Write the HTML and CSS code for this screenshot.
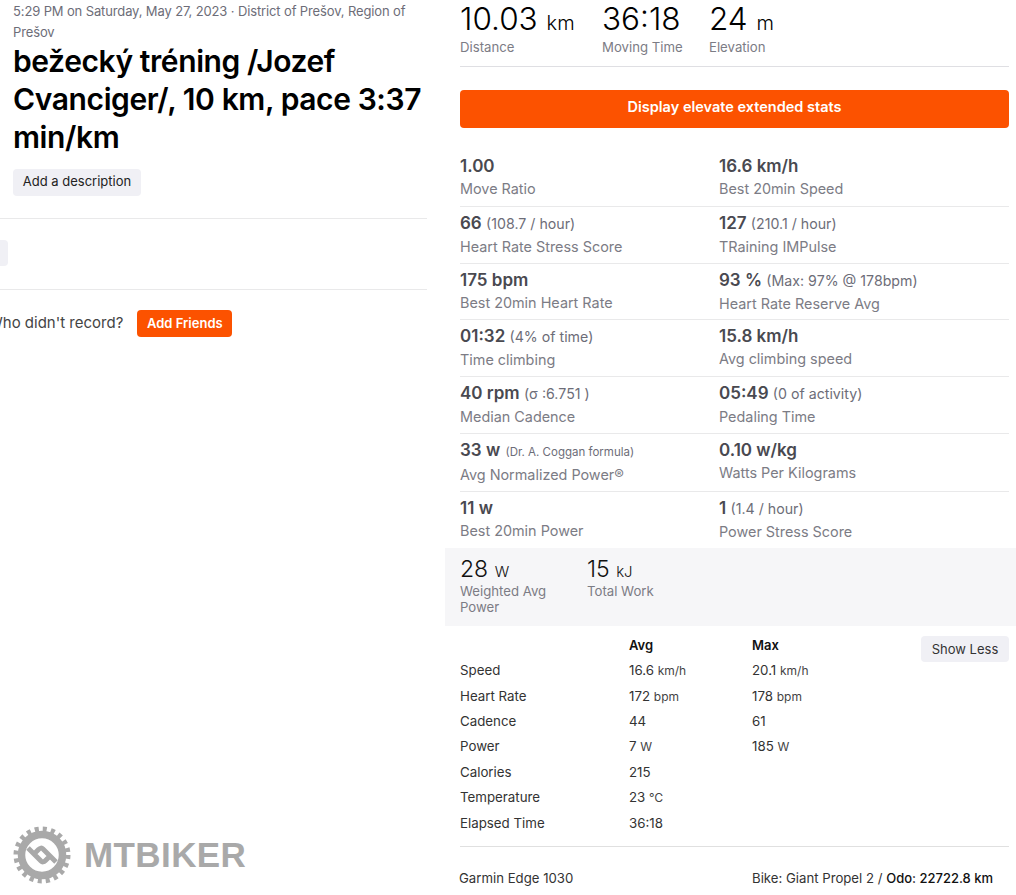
FILE: index.html
```html
<!DOCTYPE html>
<html lang="en">
<head>
<meta charset="utf-8">
<title>Activity</title>
<link rel="stylesheet" href="styles.css">
</head>
<body>
<div class="page">
  <section class="left">
    <div class="meta">5:29 PM on Saturday, May 27, 2023 · District of Prešov, Region of Prešov</div>
    <h1 class="title">bežecký tréning /Jozef Cvanciger/, 10 km, pace 3:37 min/km</h1>
    <button class="btn-light add-desc">Add a description</button>
    <hr class="rule first-rule">
    <div class="stub"></div>
    <hr class="rule second-rule">
    <div class="friends"><span class="friends-text">Who didn't record?</span><button class="btn-orange add-friends">Add Friends</button></div>
  </section>
  <section class="right">
    <div class="inset">
      <div class="top-stats">
        <div class="top-stat s1"><div class="big">10.03 <abbr>km</abbr></div><div class="lab">Distance</div></div>
        <div class="top-stat s2"><div class="big">36:18</div><div class="lab">Moving Time</div></div>
        <div class="top-stat"><div class="big">24 <abbr>m</abbr></div><div class="lab">Elevation</div></div>
      </div>
      <button class="btn-orange elevate">Display elevate extended stats</button>
      <div class="grid">
        <div class="cell"><div class="val">1.00</div><div class="lab">Move Ratio</div></div>
        <div class="cell"><div class="val">16.6 km/h</div><div class="lab">Best 20min Speed</div></div>
        <div class="cell"><div class="val">66 <small>(108.7 / hour)</small></div><div class="lab">Heart Rate Stress Score</div></div>
        <div class="cell"><div class="val">127 <small>(210.1 / hour)</small></div><div class="lab">TRaining IMPulse</div></div>
        <div class="cell"><div class="val">175 bpm</div><div class="lab">Best 20min Heart Rate</div></div>
        <div class="cell"><div class="val">93 % <small>(Max: 97% @ 178bpm)</small></div><div class="lab">Heart Rate Reserve Avg</div></div>
        <div class="cell"><div class="val">01:32 <small>(4% of time)</small></div><div class="lab">Time climbing</div></div>
        <div class="cell"><div class="val">15.8 km/h</div><div class="lab">Avg climbing speed</div></div>
        <div class="cell"><div class="val">40 rpm <small>(σ :6.751 )</small></div><div class="lab">Median Cadence</div></div>
        <div class="cell"><div class="val">05:49 <small>(0 of activity)</small></div><div class="lab">Pedaling Time</div></div>
        <div class="cell tall"><div class="val">33 w <small class="tiny">(Dr. A. Coggan formula)</small></div><div class="lab">Avg Normalized Power®</div></div>
        <div class="cell tall"><div class="val">0.10 w/kg</div><div class="lab">Watts Per Kilograms</div></div>
        <div class="cell last"><div class="val">11 w</div><div class="lab">Best 20min Power</div></div>
        <div class="cell last"><div class="val">1 <small>(1.4 / hour)</small></div><div class="lab">Power Stress Score</div></div>
      </div>
    </div>
    <div class="band">
      <div class="band-stat w1"><div class="mid">28 <abbr>W</abbr></div><div class="lab tight">Weighted Avg Power</div></div>
      <div class="band-stat"><div class="mid">15 <abbr>kJ</abbr></div><div class="lab tight">Total Work</div></div>
    </div>
    <div class="inset">
      <div class="more">
        <div class="table">
          <div></div><div class="th">Avg</div><div class="th">Max</div>
          <div>Speed</div><div>16.6 <i>km/h</i></div><div>20.1 <i>km/h</i></div>
          <div>Heart Rate</div><div>172 <i>bpm</i></div><div>178 <i>bpm</i></div>
          <div>Cadence</div><div>44</div><div>61</div>
          <div>Power</div><div>7 <i>W</i></div><div>185 <i>W</i></div>
          <div>Calories</div><div>215</div><div></div>
          <div>Temperature</div><div>23 <i>℃</i></div><div></div>
          <div>Elapsed Time</div><div>36:18</div><div></div>
        </div>
        <button class="btn-light show-less">Show Less</button>
      </div>
      <hr class="rule foot-rule">
      <div class="device">
        <div class="device-name">Garmin Edge 1030</div>
        <div>Bike: Giant Propel 2 / <b>Odo: 22722.8 km</b></div>
      </div>
    </div>
  </section>
</div>
<div class="logo">
  <svg class="gear" width="60" height="60" viewBox="0 0 60 60" aria-hidden="true">
    <circle class="gear-teeth" cx="30" cy="30" r="26"/>
    <circle class="gear-ring" cx="30" cy="30" r="20.5"/>
    <path class="gear-link" d="M16 23 L29 36 Q31 38 33.5 35.5 L37 32 M44 37 L31 24 Q29 22 26.5 24.5 L23 28"/>
  </svg>
  <span class="logo-text">MTBIKER</span>
</div>
</body>
</html>
```
FILE: styles.css
```css
* { box-sizing: border-box; }
html, body { margin: 0; height: 895px; overflow: hidden; background: #fff; }
body { font-family: Inter, "Noto Sans", sans-serif; color: #000; position: relative; }
button { font-family: inherit; border: 0; border-radius: 4px; cursor: pointer; padding: 0; }
hr.rule { border: 0; height: 1px; background: #e9e9ea; margin: 0; }
abbr { text-decoration: none; }

.page { display: flex; align-items: flex-start; }
.left { width: 445px; flex: none; padding-right: 18px; }
.right { flex: 1; min-width: 0; }
.inset { padding: 0 7px 0 15px; }

.meta { font-size: 13px; line-height: 21px; color: #6d6d78; padding: 1px 13px 0; letter-spacing: -0.13px; }
.title { margin: 0; padding: 0 0 0 13px; font-size: 30px; line-height: 38px; font-weight: 600; letter-spacing: -0.4px; position: relative; top: -1px; }
.btn-light { background: #f0f0f5; color: #222; font-size: 13px; }
.add-desc { display: block; margin: 12px 0 0 13px; width: 128px; height: 27px; padding-bottom: 3px; }
hr.first-rule { margin-top: 22px; }
.stub { width: 8px; height: 26px; margin: 21px 0 23px; background: #f0f0f5; border-radius: 0 4px 4px 0; }
.friends { display: flex; align-items: center; margin-top: 20px; height: 27px; margin-left: -12px; }
.friends-text { font-size: 15px; color: #444; margin-right: 14px; white-space: nowrap; position: relative; top: -1px; }
.btn-orange { background: #fc5200; color: #fff; font-weight: 600; }
.add-friends { width: 95px; height: 27px; font-size: 13px; padding-bottom: 2px; }

.top-stats { display: flex; height: 67px; border-bottom: 1px solid #dfdfe3; padding-top: 1px; }
.top-stat { flex: none; }
.s1 { width: 142px; }
.s2 { width: 107px; }
.big { height: 36px; font-size: 31.5px; line-height: 36px; font-weight: 300; color: #000; white-space: nowrap; }
.big abbr { font-size: 20px; line-height: 1; }
.lab { font-size: 14.4px; line-height: 20px; color: #7c7c85; white-space: nowrap; }
.top-stat .lab { font-size: 13.2px; line-height: 20px; }

.elevate { display: block; width: 549px; height: 38px; margin-top: 23px; font-size: 14.5px; padding-bottom: 5px; }

.grid { display: grid; grid-template-columns: 259px 290px; margin-top: 23px; }
.cell { height: 56.8px; padding-top: 4px; border-bottom: 1px solid #e9e9ea; }
.cell:nth-child(-n+2) { height: 55.9px; padding-top: 3px; }
.cell.last { height: 56px; border-bottom: 0; }
.cell.tall { height: 58px; }
.cell .lab { margin-top: 1px; }
.val { font-size: 17px; line-height: 24px; font-weight: 600; color: #494950; white-space: nowrap; }
.val small { font-size: 14.2px; font-weight: 400; color: #6d6d78; }
.val small.tiny { font-size: 11.5px; margin-left: 1px; }

.band { display: flex; height: 78px; background: #f6f6f8; padding: 8px 15px 0; }
.band-stat { width: 127px; flex: none; }
.band-stat.w1 .lab { white-space: normal; width: 100px; }
.mid { height: 27px; font-size: 23px; line-height: 27px; font-weight: 300; color: #111; }
.mid abbr { font-size: 15px; line-height: 1; }
.lab.tight { font-size: 13.2px; line-height: 16px; }

.more { display: flex; align-items: flex-start; padding-top: 6px; height: 220px; }
.table { display: grid; grid-template-columns: 169px 123px 1fr; grid-auto-rows: 25.4px; font-size: 13.3px; color: #333; flex: 1; align-items: center; }
.table i { font-style: normal; font-size: 12px; color: #444; }
.th { font-weight: 600; color: #111; font-size: 13px; }
.show-less { flex: none; width: 88px; height: 26px; margin-top: 4px; font-size: 13px; color: #333; }

hr.foot-rule { background: #e0e0e0; margin-top: 0; }
.device { display: flex; font-size: 13.2px; padding-top: 23px; color: #333; }
.device-name { width: 293px; margin-left: -1px; }
.device b { font-weight: 500; color: #111; font-size: 13px; }

.logo { position: absolute; left: 12px; top: 825px; display: flex; align-items: center; gap: 12px; }
.gear { display: block; }
.gear-teeth { fill: none; stroke: #a9a9a9; stroke-width: 5; stroke-dasharray: 4.084 4.084; }
.gear-ring { fill: none; stroke: #a9a9a9; stroke-width: 7.5; }
.gear-link { fill: none; stroke: #a9a9a9; stroke-width: 5; }
.logo-text { font-family: "Liberation Sans", sans-serif; font-size: 35px; font-weight: 700; color: #a9a9a9; letter-spacing: 0.4px; }
```
